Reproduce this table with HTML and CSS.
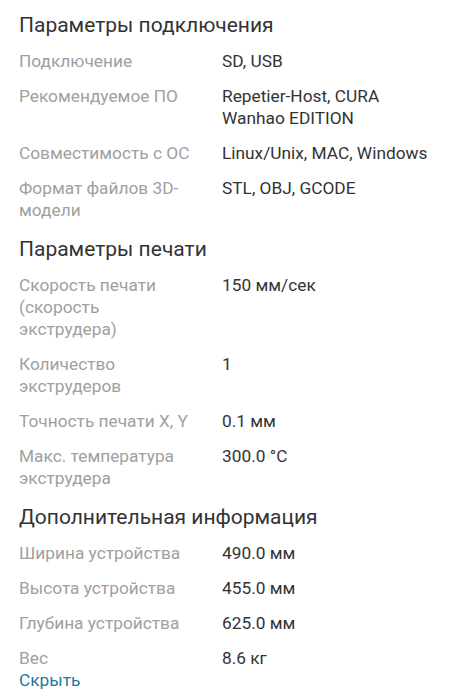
FILE: index.html
```html
<!DOCTYPE html>
<html lang="ru">
<head>
<meta charset="utf-8">
<link rel="stylesheet" href="styles.css">
</head>
<body>
<div class="specs">
  <h2 class="title">Параметры подключения</h2>
  <dl class="list">
    <div class="row"><dt>Подключение</dt><dd>SD, USB</dd></div>
    <div class="row"><dt>Рекомендуемое ПО</dt><dd>Repetier-Host, CURA Wanhao EDITION</dd></div>
    <div class="row"><dt>Совместимость с ОС</dt><dd>Linux/Unix, MAC, Windows</dd></div>
    <div class="row"><dt>Формат файлов 3D-модели</dt><dd>STL, OBJ, GCODE</dd></div>
  </dl>
  <h2 class="title">Параметры печати</h2>
  <dl class="list">
    <div class="row"><dt>Скорость печати (скорость экструдера)</dt><dd>150 мм/сек</dd></div>
    <div class="row"><dt>Количество экструдеров</dt><dd>1</dd></div>
    <div class="row"><dt>Точность печати X, Y</dt><dd>0.1 мм</dd></div>
    <div class="row"><dt>Макс. температура экструдера</dt><dd>300.0 °C</dd></div>
  </dl>
  <h2 class="title">Дополнительная информация</h2>
  <dl class="list">
    <div class="row"><dt>Ширина устройства</dt><dd>490.0 мм</dd></div>
    <div class="row"><dt>Высота устройства</dt><dd>455.0 мм</dd></div>
    <div class="row"><dt>Глубина устройства</dt><dd>625.0 мм</dd></div>
    <div class="row last"><dt>Вес</dt><dd>8.6 кг</dd></div>
  </dl>
  <a class="toggle" href="#">Скрыть</a>
</div>
</body>
</html>
```
FILE: styles.css
```css
html, body {
  margin: 0;
  padding: 0;
  background: #ffffff;
}
body {
  font-family: Roboto, "Noto Sans", sans-serif;
  color: #333333;
}
.specs {
  padding: 11px 19px 0 19px;
}
.title {
  margin: 0;
  font-size: 21px;
  font-weight: 400;
  line-height: 28px;
  color: #333333;
}
.list {
  margin: 11px 0 0 0;
  padding: 0;
  display: flex;
  flex-direction: column;
  gap: 13px;
}
.list + .title {
  margin-top: 14px;
}
.row {
  display: grid;
  grid-template-columns: 176px 1fr;
  column-gap: 27px;
  font-size: 17.3px;
  line-height: 22px;
}
.row dt {
  margin: 0;
  color: #a0a0a0;
  hyphens: manual;
}
.row dd {
  margin: 0;
  color: #333333;
}
.toggle {
  display: block;
  font-size: 17.3px;
  line-height: 22px;
  color: #1a7c9c;
  text-decoration: none;
}
```
